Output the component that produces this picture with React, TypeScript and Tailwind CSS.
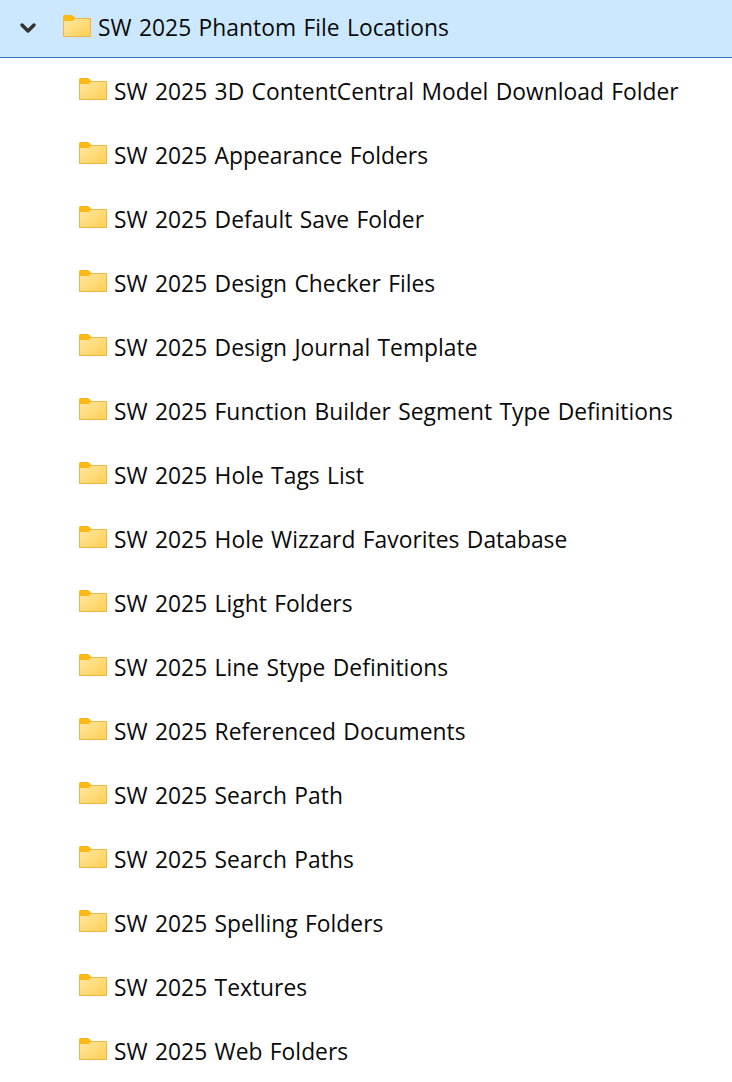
import { ChevronDown } from "lucide-react";

const folders = [
  "SW 2025 3D ContentCentral Model Download Folder",
  "SW 2025 Appearance Folders",
  "SW 2025 Default Save Folder",
  "SW 2025 Design Checker Files",
  "SW 2025 Design Journal Template",
  "SW 2025 Function Builder Segment Type Definitions",
  "SW 2025 Hole Tags List",
  "SW 2025 Hole Wizzard Favorites Database",
  "SW 2025 Light Folders",
  "SW 2025 Line Stype Definitions",
  "SW 2025 Referenced Documents",
  "SW 2025 Search Path",
  "SW 2025 Search Paths",
  "SW 2025 Spelling Folders",
  "SW 2025 Textures",
  "SW 2025 Web Folders",
];

function FolderIcon() {
  return (
    <svg width="28" height="22" viewBox="0 0 28 22" className="shrink-0 mb-[6px]">
      <defs>
        <linearGradient id="folderFill" x1="0" y1="0" x2="1" y2="1">
          <stop offset="0" stopColor="#ffe8a4" />
          <stop offset="1" stopColor="#ffcf4f" />
        </linearGradient>
      </defs>
      {/* tab */}
      <path d="M0 1.5A1.500 1.500 0 0 1 1.500 0h7a2 2 0 0 1 1.300.5L12.500 3v3H0z" fill="#fdb914" />
      {/* body */}
      <path d="M0 6h10l2.500-3H27a1 1 0 0 1 1 1v17a1 1 0 0 1-1 1H1a1 1 0 0 1-1-1z" fill="url(#folderFill)" />
      <path d="M12.500 3.500H27.500V21.500H0.500V6" stroke="#eeb54a" strokeWidth="1" fill="none" />
    </svg>
  );
}

export default function App() {
  return (
    <div className="w-[732px] h-[1082px] overflow-hidden bg-white font-['Open_Sans',sans-serif] text-[22.8px] tracking-[0.03px] [word-spacing:1.4px] text-[#0a0a0a]">
      <div className="h-[58px] flex items-center bg-[#cce8ff] border-b border-[#2f74b5] pl-[16px]">
        <ChevronDown size={24} strokeWidth={3.5} className="text-[#333] mr-[23px] mb-[2px]" />
        <FolderIcon />
        <span className="ml-[7px] whitespace-nowrap">SW 2025 Phantom File Locations</span>
      </div>
      <div className="pt-[2px]">
        {folders.map((name) => (
          <div key={name} className="h-[64px] flex items-center pl-[79px]">
            <FolderIcon />
            <span className="ml-[7px] whitespace-nowrap">{name}</span>
          </div>
        ))}
      </div>
    </div>
  );
}
